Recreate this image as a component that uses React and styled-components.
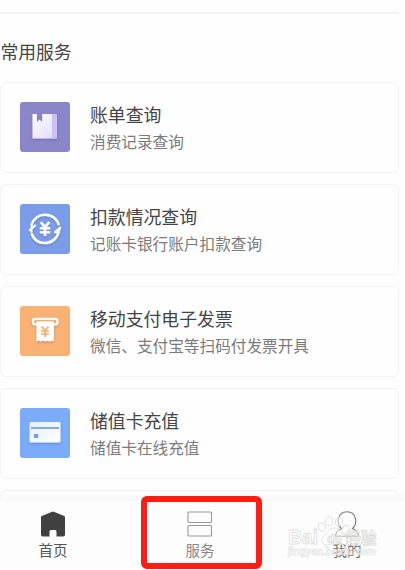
import React from "react";
import styled, { createGlobalStyle } from "styled-components";

const GlobalStyle = createGlobalStyle`
  * { box-sizing: border-box; }
  body {
    margin: 0;
    background: #fefefe;
    font-family: "Noto Sans CJK SC", sans-serif;
    font-weight: 400;
  }
`;

const Screen = styled.div`
  width: 405px;
  height: 570px;
  overflow: hidden;
  display: flex;
  flex-direction: column;
  background: #fefefe;
`;

const Content = styled.main`
  width: 399px;
  height: 501px;
  padding-top: 12px;
  overflow: hidden;
`;

const Divider = styled.hr`
  height: 2px;
  margin: 0;
  border: 0;
  background: #f5f5f5;
`;

const SectionTitle = styled.h2`
  margin: 24px 0 18px;
  padding-left: 0.5px;
  font-size: 17.8px;
  line-height: 26px;
  font-weight: 400;
  color: #444;
`;

const ServiceList = styled.div`
  width: 398.5px;
  display: grid;
  gap: 11px;
`;

const ServiceCard = styled.section`
  height: 91px;
  padding: 0 19px;
  display: flex;
  align-items: center;
  gap: 20px;
  border: 1px solid #f2f2f2;
  border-radius: 6px;
`;

const IconTile = styled.div`
  width: 50px;
  height: 50px;
  margin-top: -1px;
  flex: none;
  border-radius: 3px;
  background: ${({ $color }) => $color};

  svg { display: block; }
`;

const ServiceText = styled.div`
  display: flex;
  flex-direction: column;
  gap: 2px;
  margin-top: 1px;
  white-space: nowrap;
`;

const ServiceName = styled.div`
  font-size: 17.85px;
  line-height: 26px;
  color: #444;
`;

const ServiceNote = styled.div`
  font-size: 15.65px;
  line-height: 26px;
  color: #7b7b7b;
`;

const NavBar = styled.nav`
  position: relative;
  height: 69px;
  display: grid;
  grid-template-columns: 106px 188px 106px;
  background: #fdfdfd;

  &::before {
    content: "";
    position: absolute;
    left: 0;
    right: 0;
    top: -10px;
    height: 10px;
    background: linear-gradient(rgba(245, 245, 245, 0), #f8f8f8);
  }
`;

const NavItem = styled.div`
  display: flex;
  flex-direction: column;
  align-items: center;
  padding-top: 10px;
  color: ${({ $color }) => $color};

  svg { display: block; }
`;

const NavLabel = styled.span`
  margin-top: 2px;
  font-size: 14.5px;
  line-height: 22px;
`;

const Highlight = styled.div`
  position: absolute;
  left: 141px;
  top: -5px;
  width: 121px;
  height: 73px;
  border: 6px solid #ff1c12;
  border-radius: 6px;
`;

const Watermark = styled.div`
  position: absolute;
  left: 287px;
  top: 14px;

  svg {
    display: block;
    overflow: visible;
    font-family: "Liberation Sans", "Noto Sans CJK SC", sans-serif;
  }
`;

const BookIcon = () => (
  <svg width="50" height="50" viewBox="0 0 50 50">
    <defs>
      <linearGradient id="page" x1="0" y1="0" x2="1" y2="1">
        <stop offset="0" stopColor="#fff" />
        <stop offset="1" stopColor="#ddd9ff" />
      </linearGradient>
      <filter id="shade" x="-30%" y="-30%" width="160%" height="170%">
        <feDropShadow dx="0" dy="1.5" stdDeviation="1.3" floodColor="#354070" floodOpacity=".28" />
      </filter>
    </defs>
    <g filter="url(#shade)">
      <path d="M12.5 12H17v8l2.6-2.4 2.6 2.4v-8H37v24.5H12.5Z" fill="url(#page)" />
      <path d="M32 12h5v24.5h-5Z" fill="#c9c2f3" />
    </g>
  </svg>
);

const DebitIcon = () => (
  <svg width="50" height="50" viewBox="0 0 50 50" fill="none" stroke="#fff">
    <g filter="url(#shade)">
      <path d="M11.2 21.5C13.4 14.8 18.5 10.7 25 10.7c6.8 0 12.2 4.2 14 10.5M38.9 27.5c-1.8 7-7.2 11.5-13.9 11.5-6 0-11.2-3.6-13.5-9.5" strokeWidth="2.6" />
      <path d="M9.7 26.3 15.2 21.5M11.5 28v-5.5M40.3 23.5l-5.5 4.7h3.8Z" fill="#fff" strokeWidth="2" strokeLinejoin="round" strokeLinecap="round" />
      <path d="m20.8 18.2 4.2 5 4.2-5M25 23v9M19.8 24.2h10.4M19.8 28.2h10.4" strokeWidth="2.6" />
    </g>
  </svg>
);

const InvoiceIcon = () => (
  <svg width="50" height="50" viewBox="0 0 50 50" fill="none">
    <g filter="url(#shade)">
      <rect x="13" y="12.8" width="24.5" height="5.6" rx="2.2" stroke="#fff" strokeWidth="2.2" />
      <path d="M16.5 15h17.5v20.5l-2-1-2.2 1-2.2-1-2.2 1-2.2-1-2.3 1-2.2-1-2.2 1Z" fill="#fff" />
    </g>
    <path d="M15 15h20.5" stroke="#ffc28b" strokeWidth="1" />
    <path d="m21.5 20.5 3.5 4 3.5-4M25 24v7M21 25h8M21 28h8" stroke="#f8ac6a" strokeWidth="1.7" />
  </svg>
);

const CardIcon = () => (
  <svg width="50" height="50" viewBox="0 0 50 50">
    <defs>
      <linearGradient id="plastic" x1="0" y1="0" x2="1" y2="1">
        <stop offset="0" stopColor="#e2efff" />
        <stop offset="1" stopColor="#fff" />
      </linearGradient>
    </defs>
    <rect x="9.5" y="14" width="31" height="20.5" rx="1.5" fill="url(#plastic)" filter="url(#shade)" />
    <path d="M11 19h28v2H11Z" fill="#89a9dc" />
    <path d="M14 26h4.2v4H14Z" fill="#719fdf" />
  </svg>
);

const HomeIcon = () => (
  <svg width="26" height="26" viewBox="0 0 26 26">
    <path d="M1 6.5q0-1 .8-1.4L12.2.8q.8-.4 1.6 0l10.4 4.3q.8.4.8 1.4v17.2q0 1.8-1.8 1.8h-6.7v-5q0-1.5-1.5-1.5h-4q-1.5 0-1.5 1.5v5H2.8Q1 25.5 1 23.7Z" fill="#404040" />
  </svg>
);

const ServicesIcon = () => (
  <svg width="26" height="26" viewBox="0 0 26 26" fill="none" stroke="#999" strokeWidth="1.1">
    <rect x="1" y="1" width="23.5" height="10.5" rx="1" />
    <rect x="1" y="14.5" width="23.5" height="10.5" rx="1" />
  </svg>
);

const ProfileIcon = () => (
  <svg width="26" height="26" viewBox="0 0 26 26" fill="none" stroke="#777" strokeWidth="1.1">
    <path d="M7.5 17.5C1.8 13 3.5.8 13 .8S24.2 13 18.5 17.5Q23.5 20 24.7 24.5" />
    <path d="M7.5 17.5Q2.5 20 1.3 24.5" />
    <path d="M1.3 25.2h23.4" />
  </svg>
);

const services = [
  { name: "账单查询", note: "消费记录查询", color: "#8b85ca", Icon: BookIcon },
  { name: "扣款情况查询", note: "记账卡银行账户扣款查询", color: "#7b9de9", Icon: DebitIcon },
  { name: "移动支付电子发票", note: "微信、支付宝等扫码付发票开具", color: "#f9b174", Icon: InvoiceIcon },
  { name: "储值卡充值", note: "储值卡在线充值", color: "#7bacf9", Icon: CardIcon },
];

const tabs = [
  { label: "首页", color: "#555", Icon: HomeIcon },
  { label: "服务", color: "#888", Icon: ServicesIcon },
  { label: "我的", color: "#6b6b6b", Icon: ProfileIcon },
];

const BrandMark = () => (
  <Watermark>
    <svg width="92" height="44" viewBox="0 0 92 44" fill="#fff" fillOpacity=".5" stroke="#d5d5d5" strokeOpacity=".75" strokeWidth=".9">
      <text x="1" y="29" fontSize="20.5" fontWeight="700" textLength="30" lengthAdjust="spacingAndGlyphs">Bai</text>
      <ellipse cx="35" cy="12" rx="3.5" ry="4.3" transform="rotate(-18 35 12)" />
      <ellipse cx="42" cy="6" rx="3.5" ry="4.6" />
      <ellipse cx="52" cy="6.5" rx="3.5" ry="4.6" transform="rotate(12 52 6.5)" />
      <ellipse cx="59" cy="14.5" rx="3.5" ry="4.3" transform="rotate(22 59 14.5)" />
      <path d="M47 13c-5 0-6 4-10 8-4 4-3 9 3 9 3 0 4-1 7-1s5 1 8 1c6 0 7-5 3-9-4-4-5-8-11-8Z" />
      <text x="40" y="27.5" fontSize="12" fontWeight="700">du</text>
      <text x="58.5" y="28.5" fontSize="15.5" fontWeight="700">经验</text>
      <text x="1" y="40" fontSize="10" fontWeight="700" stroke="#e2e2e2" strokeWidth=".8" textLength="88" lengthAdjust="spacingAndGlyphs">jingyan.baidu.com</text>
    </svg>
  </Watermark>
);

export default function App() {
  return (
    <Screen>
      <GlobalStyle />
      <Content>
        <Divider />
        <SectionTitle>常用服务</SectionTitle>
        <ServiceList>
          {services.map(({ name, note, color, Icon }) => (
            <ServiceCard key={name}>
              <IconTile $color={color}><Icon /></IconTile>
              <ServiceText>
                <ServiceName>{name}</ServiceName>
                <ServiceNote>{note}</ServiceNote>
              </ServiceText>
            </ServiceCard>
          ))}
          <ServiceCard />
        </ServiceList>
      </Content>
      <NavBar>
        {tabs.map(({ label, color, Icon }) => (
          <NavItem key={label} $color={color}>
            <Icon />
            <NavLabel>{label}</NavLabel>
          </NavItem>
        ))}
        <BrandMark />
        <Highlight />
      </NavBar>
    </Screen>
  );
}
